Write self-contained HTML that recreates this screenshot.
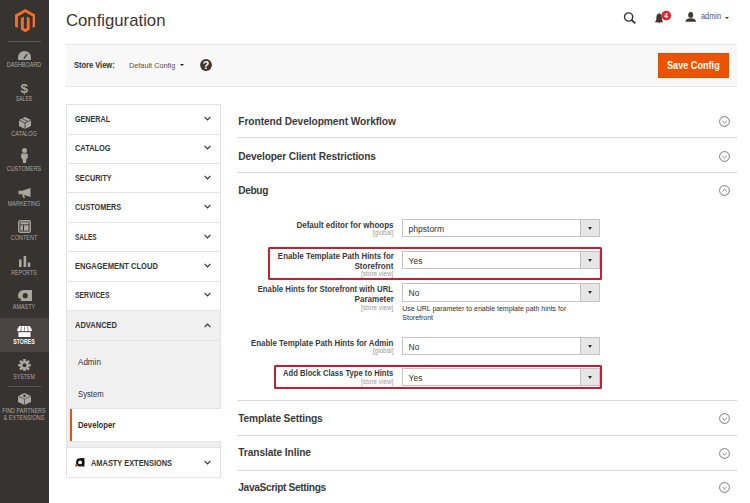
<!DOCTYPE html>
<html><head><meta charset="utf-8"><title>Configuration</title>
<style>
*{margin:0;padding:0}
html,body{width:750px;height:503px;overflow:hidden;background:#fff;font-family:"Liberation Sans",sans-serif;color:#303030;position:relative}
.t{position:absolute;white-space:nowrap;line-height:1}
.b{position:absolute}
</style></head><body>
<div class="b" style="left:0px;top:0px;width:48.5px;height:503px;background:#373330"></div>
<svg class="b" style="left:14.7px;top:8.7px" width="20.6" height="23.2" viewBox="0 0 43.3 50" preserveAspectRatio="none">
<path d="M21.65 0 L0 12.5 V37.5 L6.2 41.1 V16.1 L21.65 7.2 L37.1 16.1 V41.1 L43.3 37.5 V12.5 Z" fill="#f46f25"/>
<path d="M24.75 41.1 L21.65 42.9 L18.55 41.1 V16.1 L12.35 19.7 V44.6 L21.65 50 L30.95 44.6 V19.7 L24.75 16.1 Z" fill="#f46f25"/></svg>
<div class="b" style="left:8px;top:41px;width:33px;height:1px;background:#5c5651"></div>
<svg class="b" style="left:18px;top:51px" width="13" height="9" viewBox="0 0 13 9"><path d="M0.1 9 V6.2 A6.4 6.2 0 0 1 12.9 6.2 V9 Z" fill="#aaa6a0"/><path d="M6.2 7.2 L9 3.2" stroke="#373330" stroke-width="1.3" stroke-linecap="round"/><path d="M2.5 6 A4.2 4.2 0 0 1 10.5 6" fill="none" stroke="#8f8a85" stroke-width="0.5" stroke-dasharray="1 1.2"/></svg>
<div class="t" style="left:-25.60px;width:100px;text-align:center;top:62.47px;font-size:6.3px;font-weight:normal;color:#aaa6a0;letter-spacing:0px;transform:scaleX(0.8676);transform-origin:50% 50%;">DASHBOARD</div>
<div class="t" style="left:-25.70px;width:100px;text-align:center;top:82.30px;font-size:13.5px;font-weight:bold;color:#aaa6a0;letter-spacing:0px;">$</div>
<div class="t" style="left:-25.60px;width:100px;text-align:center;top:96.47px;font-size:6.3px;font-weight:normal;color:#aaa6a0;letter-spacing:0px;transform:scaleX(0.7959);transform-origin:50% 50%;">SALES</div>
<svg class="b" style="left:19px;top:117px" width="12" height="12" viewBox="0 0 12 12"><path d="M6 0 L12 3 V9 L6 12 L0 9 V3 Z" fill="#aaa6a0"/><path d="M0 3 L6 6 L12 3 M6 6 V12 M3 1.5 L9 4.5" stroke="#373330" stroke-width="0.8" fill="none"/></svg>
<div class="t" style="left:-25.60px;width:100px;text-align:center;top:131.17px;font-size:6.3px;font-weight:normal;color:#aaa6a0;letter-spacing:0px;transform:scaleX(0.8750);transform-origin:50% 50%;">CATALOG</div>
<svg class="b" style="left:21px;top:148px" width="7" height="15" viewBox="0 0 7 15"><circle cx="3.5" cy="2.6" r="2.5" fill="#aaa6a0"/><path d="M0.5 5.6 H6.5 L7 10 L5.6 10.5 L5 15 H2 L1.4 10.5 L0 10 Z" fill="#aaa6a0"/></svg>
<div class="t" style="left:-25.60px;width:100px;text-align:center;top:166.27px;font-size:6.3px;font-weight:normal;color:#aaa6a0;letter-spacing:0px;transform:scaleX(0.8568);transform-origin:50% 50%;">CUSTOMERS</div>
<svg class="b" style="left:18px;top:187.5px" width="14" height="10" viewBox="0 0 14 10"><path d="M0.5 2.8 H4 L12.5 0 V9 L4 6.2 H0.5 Z" fill="#aaa6a0"/><path d="M4 6.2 L5.3 10 H7 L6 6.8 Z" fill="#aaa6a0"/></svg>
<div class="t" style="left:-25.60px;width:100px;text-align:center;top:200.97px;font-size:6.3px;font-weight:normal;color:#aaa6a0;letter-spacing:0px;transform:scaleX(0.8712);transform-origin:50% 50%;">MARKETING</div>
<svg class="b" style="left:18px;top:219.5px" width="13" height="13" viewBox="0 0 13 13"><rect x="0.75" y="0.75" width="11.5" height="11.5" rx="1.6" fill="none" stroke="#aaa6a0" stroke-width="1.4"/><rect x="2.4" y="2.2" width="8.2" height="2.2" fill="#aaa6a0"/><rect x="2.4" y="5.3" width="2.6" height="5.3" fill="#aaa6a0"/><rect x="6" y="5.3" width="4.6" height="5.3" fill="#aaa6a0"/></svg>
<div class="t" style="left:-25.60px;width:100px;text-align:center;top:235.47px;font-size:6.3px;font-weight:normal;color:#aaa6a0;letter-spacing:0px;transform:scaleX(0.8729);transform-origin:50% 50%;">CONTENT</div>
<svg class="b" style="left:19px;top:255.5px" width="12" height="11.5" viewBox="0 0 12 11.5"><rect x="0" y="3.5" width="2.6" height="8" fill="#aaa6a0"/><rect x="4.6" y="0" width="2.6" height="11.5" fill="#aaa6a0"/><rect x="8.7" y="6.5" width="2.6" height="5" fill="#aaa6a0"/></svg>
<div class="t" style="left:-25.60px;width:100px;text-align:center;top:270.07px;font-size:6.3px;font-weight:normal;color:#aaa6a0;letter-spacing:0px;transform:scaleX(0.8365);transform-origin:50% 50%;">REPORTS</div>
<svg class="b" style="left:17.5px;top:289.6px" width="14.2" height="11.4" viewBox="0 0 14.2 11.4"><path d="M5.7 0 H14.2 V11.4 H5.7 A5.7 5.7 0 0 1 5.7 0 Z" fill="#aaa6a0"/><circle cx="7.2" cy="5.7" r="2.6" fill="#373330"/><circle cx="1.9" cy="9.3" r="1.1" fill="#373330"/></svg>
<div class="t" style="left:-25.60px;width:100px;text-align:center;top:304.37px;font-size:6.3px;font-weight:normal;color:#aaa6a0;letter-spacing:0px;transform:scaleX(0.8692);transform-origin:50% 50%;">AMASTY</div>
<div class="b" style="left:0px;top:317.5px;width:48.5px;height:34.5px;background:#4a4542"></div>
<svg class="b" style="left:17px;top:325.5px" width="15" height="11" viewBox="0 0 15 11"><path d="M2.2 0 H12.8 L15 3.8 C15 5 14 5.3 13.2 5.3 C12.4 5.3 11.6 4.8 11.2 4.2 C10.8 4.8 10 5.3 9.2 5.3 C8.4 5.3 7.6 4.8 7.5 4.2 C7.2 4.8 6.6 5.3 5.8 5.3 C5 5.3 4.2 4.8 3.8 4.2 C3.4 4.8 2.6 5.3 1.8 5.3 C1 5.3 0 5 0 3.8 Z" fill="#fff"/><path d="M4.5 0.5 L4 4 M7.5 0.5 V4 M10.5 0.5 L11 4" stroke="#4a4542" stroke-width="0.6"/><rect x="1.5" y="6.2" width="12" height="4.8" fill="#fff"/></svg>
<div class="t" style="left:-25.60px;width:100px;text-align:center;top:338.97px;font-size:6.3px;font-weight:bold;color:#fff;letter-spacing:0px;transform:scaleX(0.8367);transform-origin:50% 50%;">STORES</div>
<svg class="b" style="left:18px;top:358.5px" width="13" height="12.5" viewBox="0 0 13 13"><g fill="#aaa6a0"><circle cx="6.5" cy="6.5" r="4.6"/><rect x="5.2" y="0" width="2.6" height="13"/><rect x="0" y="5.2" width="13" height="2.6"/><rect x="5.2" y="0" width="2.6" height="13" transform="rotate(45 6.5 6.5)"/><rect x="5.2" y="0" width="2.6" height="13" transform="rotate(-45 6.5 6.5)"/></g><circle cx="6.5" cy="6.5" r="2" fill="#373330"/></svg>
<div class="t" style="left:-25.60px;width:100px;text-align:center;top:373.97px;font-size:6.3px;font-weight:normal;color:#aaa6a0;letter-spacing:0px;transform:scaleX(0.8344);transform-origin:50% 50%;">SYSTEM</div>
<div class="b" style="left:8px;top:386px;width:33px;height:1px;background:#5c5651"></div>
<svg class="b" style="left:18px;top:393px" width="13" height="12" viewBox="0 0 13 12"><path d="M6.5 0 L13 3 V9 L6.5 12 L0 9 V3 Z" fill="#aaa6a0"/><path d="M0 3 L6.5 6 L13 3 M6.5 6 V12" stroke="#373330" stroke-width="0.6" fill="none"/><circle cx="6.5" cy="2.8" r="1.2" fill="#373330"/></svg>
<div class="t" style="left:-25.60px;width:100px;text-align:center;top:407.87px;font-size:6.3px;font-weight:normal;color:#aaa6a0;letter-spacing:0px;transform:scaleX(0.8629);transform-origin:50% 50%;">FIND PARTNERS</div>
<div class="t" style="left:-25.60px;width:100px;text-align:center;top:414.97px;font-size:6.3px;font-weight:normal;color:#aaa6a0;letter-spacing:0px;transform:scaleX(0.8805);transform-origin:50% 50%;">&amp; EXTENSIONS</div>
<div class="t" style="left:66.00px;top:11.95px;font-size:16.2px;font-weight:normal;color:#41362f;letter-spacing:0px;transform:scaleX(1.0327);transform-origin:0 50%;">Configuration</div>
<svg class="b" style="left:623px;top:11.5px" width="14" height="12" viewBox="0 0 14 12"><circle cx="5.6" cy="5" r="4.1" fill="none" stroke="#303030" stroke-width="1.4"/><path d="M8.6 8 L12.3 11.3" stroke="#303030" stroke-width="1.7"/></svg>
<svg class="b" style="left:654px;top:10px" width="18" height="14" viewBox="0 0 18 14"><path d="M0.8 12.2 C2.3 10.8 2.4 9.3 2.4 7.3 C2.4 4.9 3.5 3.4 5.1 3.4 C6.7 3.4 7.8 4.9 7.8 7.3 C7.8 9.3 7.9 10.8 9.4 12.2 Z" fill="#41362f"/><rect x="4.3" y="12.2" width="1.7" height="0.9" fill="#41362f"/><circle cx="12.2" cy="5.6" r="4.9" fill="#e22626"/><text x="12.2" y="8" font-size="6.6" font-weight="bold" fill="#fff" text-anchor="middle" font-family="Liberation Sans">4</text></svg>
<svg class="b" style="left:684.5px;top:12px" width="12" height="10" viewBox="0 0 12 10"><ellipse cx="5.7" cy="2.9" rx="2.5" ry="2.9" fill="#41362f"/><path d="M0.3 9.8 C0.8 7.3 2.5 6.3 5.7 6.3 C8.9 6.3 10.6 7.3 11.2 9.8 Z" fill="#41362f"/></svg>
<div class="t" style="left:700.50px;top:13.39px;font-size:8.2px;font-weight:normal;color:#5a534f;letter-spacing:0px;transform:scaleX(0.9012);transform-origin:0 50%;">admin</div>
<div class="b" style="left:725.2px;top:16.5px;width:0;height:0;border-left:2.3px solid transparent;border-right:2.3px solid transparent;border-top:2.6px solid #41362f"></div>
<div class="b" style="left:66px;top:44px;width:671px;height:43px;background:#f8f8f8;border-top:1px solid #e6e6e6;border-bottom:1px solid #e6e6e6;box-sizing:border-box"></div>
<div class="t" style="left:74.00px;top:62.49px;font-size:8.2px;font-weight:bold;color:#303030;letter-spacing:0px;transform:scaleX(0.9151);transform-origin:0 50%;">Store View:</div>
<div class="t" style="left:128.90px;top:61.66px;font-size:8px;font-weight:normal;color:#5a534f;letter-spacing:0px;transform:scaleX(0.9135);transform-origin:0 50%;">Default Config</div>
<div class="b" style="left:180.1px;top:64px;width:0;height:0;border-left:2.3px solid transparent;border-right:2.3px solid transparent;border-top:2.9px solid #1a1a1a"></div>
<svg class="b" style="left:200.1px;top:59.4px" width="12" height="12" viewBox="0 0 12 12"><circle cx="6" cy="6" r="5.9" fill="#41362f"/><text x="6" y="9.9" font-size="10.6" font-weight="bold" fill="#fff" text-anchor="middle" font-family="Liberation Sans">?</text></svg>
<div class="b" style="left:657.8px;top:52.8px;width:71.0px;height:25.0px;background:#eb5202;border:1px solid #e04f00;box-sizing:border-box"></div>
<div class="t" style="left:666.80px;top:60.50px;font-size:10px;font-weight:bold;color:#fff;letter-spacing:0px;transform:scaleX(0.9119);transform-origin:0 50%;">Save Config</div>
<div class="b" style="left:66px;top:103.5px;width:155px;height:305.0px;background:#fff;border:1px solid #e3e3e3;border-bottom:none;box-sizing:border-box"></div>
<div class="t" style="left:75.00px;top:114.93px;font-size:8.4px;font-weight:bold;color:#363636;letter-spacing:0px;transform:scaleX(0.8572);transform-origin:0 50%;">GENERAL</div>
<svg class="b" style="left:203.5px;top:116.10000000000001px" width="7" height="5" viewBox="0 0 7 5"><path d="M0.6 0.8 L3.5 3.8 L6.4 0.8" fill="none" stroke="#303030" stroke-width="1.15"/></svg>
<div class="b" style="left:66px;top:133.5px;width:155px;height:1.0px;background:#e3e3e3"></div>
<div class="t" style="left:75.00px;top:144.23px;font-size:8.4px;font-weight:bold;color:#363636;letter-spacing:0px;transform:scaleX(0.8879);transform-origin:0 50%;">CATALOG</div>
<svg class="b" style="left:203.5px;top:145.4px" width="7" height="5" viewBox="0 0 7 5"><path d="M0.6 0.8 L3.5 3.8 L6.4 0.8" fill="none" stroke="#303030" stroke-width="1.15"/></svg>
<div class="b" style="left:66px;top:162.8px;width:155px;height:1.0px;background:#e3e3e3"></div>
<div class="t" style="left:75.00px;top:173.73px;font-size:8.4px;font-weight:bold;color:#363636;letter-spacing:0px;transform:scaleX(0.8653);transform-origin:0 50%;">SECURITY</div>
<svg class="b" style="left:203.5px;top:174.9px" width="7" height="5" viewBox="0 0 7 5"><path d="M0.6 0.8 L3.5 3.8 L6.4 0.8" fill="none" stroke="#303030" stroke-width="1.15"/></svg>
<div class="b" style="left:66px;top:192.3px;width:155px;height:1.0px;background:#e3e3e3"></div>
<div class="t" style="left:75.00px;top:203.23px;font-size:8.4px;font-weight:bold;color:#363636;letter-spacing:0px;transform:scaleX(0.8648);transform-origin:0 50%;">CUSTOMERS</div>
<svg class="b" style="left:203.5px;top:204.4px" width="7" height="5" viewBox="0 0 7 5"><path d="M0.6 0.8 L3.5 3.8 L6.4 0.8" fill="none" stroke="#303030" stroke-width="1.15"/></svg>
<div class="b" style="left:66px;top:221.8px;width:155px;height:1.0px;background:#e3e3e3"></div>
<div class="t" style="left:75.00px;top:232.73px;font-size:8.4px;font-weight:bold;color:#363636;letter-spacing:0px;transform:scaleX(0.7764);transform-origin:0 50%;">SALES</div>
<svg class="b" style="left:203.5px;top:233.9px" width="7" height="5" viewBox="0 0 7 5"><path d="M0.6 0.8 L3.5 3.8 L6.4 0.8" fill="none" stroke="#303030" stroke-width="1.15"/></svg>
<div class="b" style="left:66px;top:251.3px;width:155px;height:1.0px;background:#e3e3e3"></div>
<div class="t" style="left:75.00px;top:262.23px;font-size:8.4px;font-weight:bold;color:#363636;letter-spacing:0px;transform:scaleX(0.8992);transform-origin:0 50%;">ENGAGEMENT CLOUD</div>
<svg class="b" style="left:203.5px;top:263.4px" width="7" height="5" viewBox="0 0 7 5"><path d="M0.6 0.8 L3.5 3.8 L6.4 0.8" fill="none" stroke="#303030" stroke-width="1.15"/></svg>
<div class="b" style="left:66px;top:280.8px;width:155px;height:1.0px;background:#e3e3e3"></div>
<div class="t" style="left:75.00px;top:290.93px;font-size:8.4px;font-weight:bold;color:#363636;letter-spacing:0px;transform:scaleX(0.8166);transform-origin:0 50%;">SERVICES</div>
<svg class="b" style="left:203.5px;top:292.09999999999997px" width="7" height="5" viewBox="0 0 7 5"><path d="M0.6 0.8 L3.5 3.8 L6.4 0.8" fill="none" stroke="#303030" stroke-width="1.15"/></svg>
<div class="b" style="left:66px;top:309.5px;width:155px;height:1.0px;background:#e3e3e3"></div>
<div class="b" style="left:67px;top:310.5px;width:153px;height:98.0px;background:#f0f0f0"></div>
<div class="b" style="left:66px;top:339.6px;width:155px;height:1.0px;background:#e3e3e3"></div>
<div class="t" style="left:75.00px;top:321.43px;font-size:8.4px;font-weight:bold;color:#363636;letter-spacing:0px;transform:scaleX(0.8976);transform-origin:0 50%;">ADVANCED</div>
<svg class="b" style="left:203.5px;top:323px" width="7" height="5" viewBox="0 0 7 5"><path d="M0.6 4.2 L3.5 1.2 L6.4 4.2" fill="none" stroke="#303030" stroke-width="1.15"/></svg>
<div class="t" style="left:77.60px;top:357.93px;font-size:8.4px;font-weight:normal;color:#303030;letter-spacing:0px;transform:scaleX(0.9634);transform-origin:0 50%;">Admin</div>
<div class="t" style="left:77.60px;top:389.73px;font-size:8.4px;font-weight:normal;color:#303030;letter-spacing:0px;transform:scaleX(0.9196);transform-origin:0 50%;">System</div>
<div class="b" style="left:66px;top:408.5px;width:155px;height:32.5px;background:#fff"></div>
<div class="b" style="left:66px;top:408.5px;width:1px;height:32.5px;background:#e3e3e3"></div>
<div class="b" style="left:67px;top:408.5px;width:3px;height:32.5px;background:#f0f0f0"></div>
<div class="b" style="left:70px;top:408.5px;width:2px;height:32.5px;background:#eb5202"></div>
<div class="t" style="left:77.60px;top:421.33px;font-size:8.4px;font-weight:bold;color:#303030;letter-spacing:0px;transform:scaleX(0.9215);transform-origin:0 50%;">Developer</div>
<div class="b" style="left:66px;top:441px;width:155px;height:6.5px;background:#f0f0f0;border-left:1px solid #e3e3e3;border-right:1px solid #e3e3e3;box-sizing:border-box"></div>
<div class="b" style="left:66px;top:441px;width:155px;height:1px;background:#e3e3e3"></div>
<div class="b" style="left:66px;top:407.6px;width:155px;height:1.0px;background:#e3e3e3"></div>
<div class="b" style="left:66px;top:447px;width:155px;height:30.5px;background:#fff;border:1px solid #e3e3e3;box-sizing:border-box"></div>
<svg class="b" style="left:74.5px;top:458px" width="10" height="9" viewBox="0 0 10 9"><circle cx="5.2" cy="4.4" r="4.1" fill="#111"/><rect x="7.3" y="0" width="2.1" height="8.6" fill="#111"/><rect x="5.2" y="0.3" width="3" height="2" fill="#111"/><circle cx="5.1" cy="4.4" r="1.9" fill="#fff"/><circle cx="1.3" cy="7.4" r="1.3" fill="#eb5202"/></svg>
<div class="t" style="left:90.60px;top:459.33px;font-size:8.4px;font-weight:bold;color:#363636;letter-spacing:0px;transform:scaleX(0.8851);transform-origin:0 50%;">AMASTY EXTENSIONS</div>
<svg class="b" style="left:203.5px;top:459.6px" width="7" height="5" viewBox="0 0 7 5"><path d="M0.6 0.8 L3.5 3.8 L6.4 0.8" fill="none" stroke="#303030" stroke-width="1.15"/></svg>
<div class="b" style="left:238px;top:137px;width:499px;height:1px;background:#d6d6d6"></div>
<div class="b" style="left:238px;top:172px;width:499px;height:1px;background:#d6d6d6"></div>
<div class="b" style="left:238px;top:400px;width:499px;height:1px;background:#d6d6d6"></div>
<div class="b" style="left:238px;top:435px;width:499px;height:1px;background:#d6d6d6"></div>
<div class="b" style="left:238px;top:469.5px;width:499px;height:1.0px;background:#d6d6d6"></div>
<div class="t" style="left:238.30px;top:116.73px;font-size:10.2px;font-weight:bold;color:#3a3a3a;letter-spacing:-0.064px;">Frontend Development Workflow</div>
<svg class="b" style="left:719px;top:115.9px" width="11" height="11" viewBox="0 0 11 11"><circle cx="5.5" cy="5.5" r="4.9" fill="none" stroke="#6b6b6b" stroke-width="0.9"/><path d="M3.4 5 L5.5 7 L7.6 5" fill="none" stroke="#6b6b6b" stroke-width="0.9"/></svg>
<div class="t" style="left:238.30px;top:151.53px;font-size:10.2px;font-weight:bold;color:#3a3a3a;letter-spacing:-0.162px;">Developer Client Restrictions</div>
<svg class="b" style="left:719px;top:150.6px" width="11" height="11" viewBox="0 0 11 11"><circle cx="5.5" cy="5.5" r="4.9" fill="none" stroke="#6b6b6b" stroke-width="0.9"/><path d="M3.4 5 L5.5 7 L7.6 5" fill="none" stroke="#6b6b6b" stroke-width="0.9"/></svg>
<div class="t" style="left:238.30px;top:186.33px;font-size:10.2px;font-weight:bold;color:#3a3a3a;letter-spacing:-0.392px;">Debug</div>
<svg class="b" style="left:719px;top:185.0px" width="11" height="11" viewBox="0 0 11 11"><circle cx="5.5" cy="5.5" r="4.9" fill="none" stroke="#6b6b6b" stroke-width="0.9"/><path d="M3.4 6.3 L5.5 4.3 L7.6 6.3" fill="none" stroke="#6b6b6b" stroke-width="0.9"/></svg>
<div class="t" style="left:238.30px;top:414.33px;font-size:10.2px;font-weight:bold;color:#3a3a3a;letter-spacing:-0.164px;">Template Settings</div>
<svg class="b" style="left:719px;top:413.0px" width="11" height="11" viewBox="0 0 11 11"><circle cx="5.5" cy="5.5" r="4.9" fill="none" stroke="#6b6b6b" stroke-width="0.9"/><path d="M3.4 5 L5.5 7 L7.6 5" fill="none" stroke="#6b6b6b" stroke-width="0.9"/></svg>
<div class="t" style="left:238.30px;top:448.43px;font-size:10.2px;font-weight:bold;color:#3a3a3a;letter-spacing:-0.1px;">Translate Inline</div>
<svg class="b" style="left:719px;top:447.5px" width="11" height="11" viewBox="0 0 11 11"><circle cx="5.5" cy="5.5" r="4.9" fill="none" stroke="#6b6b6b" stroke-width="0.9"/><path d="M3.4 5 L5.5 7 L7.6 5" fill="none" stroke="#6b6b6b" stroke-width="0.9"/></svg>
<div class="t" style="left:238.30px;top:483.13px;font-size:10.2px;font-weight:bold;color:#3a3a3a;letter-spacing:-0.371px;">JavaScript Settings</div>
<svg class="b" style="left:719px;top:482.1px" width="11" height="11" viewBox="0 0 11 11"><circle cx="5.5" cy="5.5" r="4.9" fill="none" stroke="#6b6b6b" stroke-width="0.9"/><path d="M3.4 5 L5.5 7 L7.6 5" fill="none" stroke="#6b6b6b" stroke-width="0.9"/></svg>
<div class="t" style="right:356.60px;top:220.00px;font-size:9.4px;font-weight:bold;color:#3a3a3a;letter-spacing:0px;transform:scaleX(0.8551);transform-origin:100% 50%;">Default editor for whoops</div>
<div class="t" style="right:356.60px;top:229.99px;font-size:6.4px;font-weight:normal;color:#9a9a9a;letter-spacing:0px;">[global]</div>
<div class="b" style="left:402.3px;top:218.8px;width:197.5px;height:18.3px;border:1px solid #c4c4c4;background:#fff;box-sizing:border-box"><div class="b" style="right:0;top:0;width:19.2px;height:100%;border-left:1px solid #c2c2c2;background:#e6e6e6;box-sizing:border-box"></div><div class="b" style="left:185.1px;top:7.2px;width:0;height:0;border-left:2.4px solid transparent;border-right:2.4px solid transparent;border-top:3px solid #303030"></div></div>
<div class="t" style="left:408.60px;top:224.94px;font-size:8.5px;font-weight:normal;color:#303030;letter-spacing:0px;">phpstorm</div>
<div class="b" style="left:267.8px;top:247px;width:334.5px;height:33px;border:2px solid #c01f36;border-radius:1.5px;box-sizing:border-box"></div>
<div class="t" style="right:356.60px;top:250.50px;font-size:9.4px;font-weight:bold;color:#3a3a3a;letter-spacing:0px;transform:scaleX(0.8414);transform-origin:100% 50%;">Enable Template Path Hints for</div>
<div class="t" style="right:356.60px;top:260.80px;font-size:9.4px;font-weight:bold;color:#3a3a3a;letter-spacing:0px;transform:scaleX(0.8564);transform-origin:100% 50%;">Storefront</div>
<div class="t" style="right:356.60px;top:270.69px;font-size:6.4px;font-weight:normal;color:#9a9a9a;letter-spacing:0px;">[store view]</div>
<div class="b" style="left:402.3px;top:250.6px;width:197.5px;height:18.3px;border:1px solid #c4c4c4;background:#fff;box-sizing:border-box"><div class="b" style="right:0;top:0;width:19.2px;height:100%;border-left:1px solid #c2c2c2;background:#e6e6e6;box-sizing:border-box"></div><div class="b" style="left:185.1px;top:7.2px;width:0;height:0;border-left:2.4px solid transparent;border-right:2.4px solid transparent;border-top:3px solid #303030"></div></div>
<div class="t" style="left:408.60px;top:256.75px;font-size:8.5px;font-weight:normal;color:#303030;letter-spacing:0px;">Yes</div>
<div class="t" style="right:356.60px;top:284.20px;font-size:9.4px;font-weight:bold;color:#3a3a3a;letter-spacing:0px;transform:scaleX(0.8304);transform-origin:100% 50%;">Enable Hints for Storefront with URL</div>
<div class="t" style="right:356.60px;top:294.20px;font-size:9.4px;font-weight:bold;color:#3a3a3a;letter-spacing:0px;transform:scaleX(0.8569);transform-origin:100% 50%;">Parameter</div>
<div class="t" style="right:356.60px;top:304.69px;font-size:6.4px;font-weight:normal;color:#9a9a9a;letter-spacing:0px;">[store view]</div>
<div class="b" style="left:402.3px;top:283.3px;width:197.5px;height:18.3px;border:1px solid #c4c4c4;background:#fff;box-sizing:border-box"><div class="b" style="right:0;top:0;width:19.2px;height:100%;border-left:1px solid #c2c2c2;background:#e6e6e6;box-sizing:border-box"></div><div class="b" style="left:185.1px;top:7.2px;width:0;height:0;border-left:2.4px solid transparent;border-right:2.4px solid transparent;border-top:3px solid #303030"></div></div>
<div class="t" style="left:408.60px;top:289.44px;font-size:8.5px;font-weight:normal;color:#303030;letter-spacing:0px;">No</div>
<div class="t" style="left:402.30px;top:305.39px;font-size:7px;font-weight:normal;color:#303030;letter-spacing:0px;">Use URL parameter to enable template path hints for</div>
<div class="t" style="left:402.30px;top:314.19px;font-size:7px;font-weight:normal;color:#303030;letter-spacing:0px;">Storefront</div>
<div class="t" style="right:356.60px;top:338.20px;font-size:9.4px;font-weight:bold;color:#3a3a3a;letter-spacing:0px;transform:scaleX(0.8404);transform-origin:100% 50%;">Enable Template Path Hints for Admin</div>
<div class="t" style="right:356.60px;top:347.89px;font-size:6.4px;font-weight:normal;color:#9a9a9a;letter-spacing:0px;">[global]</div>
<div class="b" style="left:402.3px;top:337.1px;width:197.5px;height:18.3px;border:1px solid #c4c4c4;background:#fff;box-sizing:border-box"><div class="b" style="right:0;top:0;width:19.2px;height:100%;border-left:1px solid #c2c2c2;background:#e6e6e6;box-sizing:border-box"></div><div class="b" style="left:185.1px;top:7.2px;width:0;height:0;border-left:2.4px solid transparent;border-right:2.4px solid transparent;border-top:3px solid #303030"></div></div>
<div class="t" style="left:408.60px;top:343.25px;font-size:8.5px;font-weight:normal;color:#303030;letter-spacing:0px;">No</div>
<div class="b" style="left:274.3px;top:365.3px;width:328px;height:23.4px;border:2px solid #c01f36;border-radius:1.5px;box-sizing:border-box"></div>
<div class="t" style="right:356.60px;top:368.20px;font-size:9.4px;font-weight:bold;color:#3a3a3a;letter-spacing:0px;transform:scaleX(0.8145);transform-origin:100% 50%;">Add Block Class Type to Hints</div>
<div class="t" style="right:356.60px;top:379.09px;font-size:6.4px;font-weight:normal;color:#9a9a9a;letter-spacing:0px;">[store view]</div>
<div class="b" style="left:402.3px;top:368px;width:197.5px;height:18.3px;border:1px solid #c4c4c4;background:#fff;box-sizing:border-box"><div class="b" style="right:0;top:0;width:19.2px;height:100%;border-left:1px solid #c2c2c2;background:#e6e6e6;box-sizing:border-box"></div><div class="b" style="left:185.1px;top:7.2px;width:0;height:0;border-left:2.4px solid transparent;border-right:2.4px solid transparent;border-top:3px solid #303030"></div></div>
<div class="t" style="left:408.60px;top:374.14px;font-size:8.5px;font-weight:normal;color:#303030;letter-spacing:0px;">Yes</div>
</body></html>
